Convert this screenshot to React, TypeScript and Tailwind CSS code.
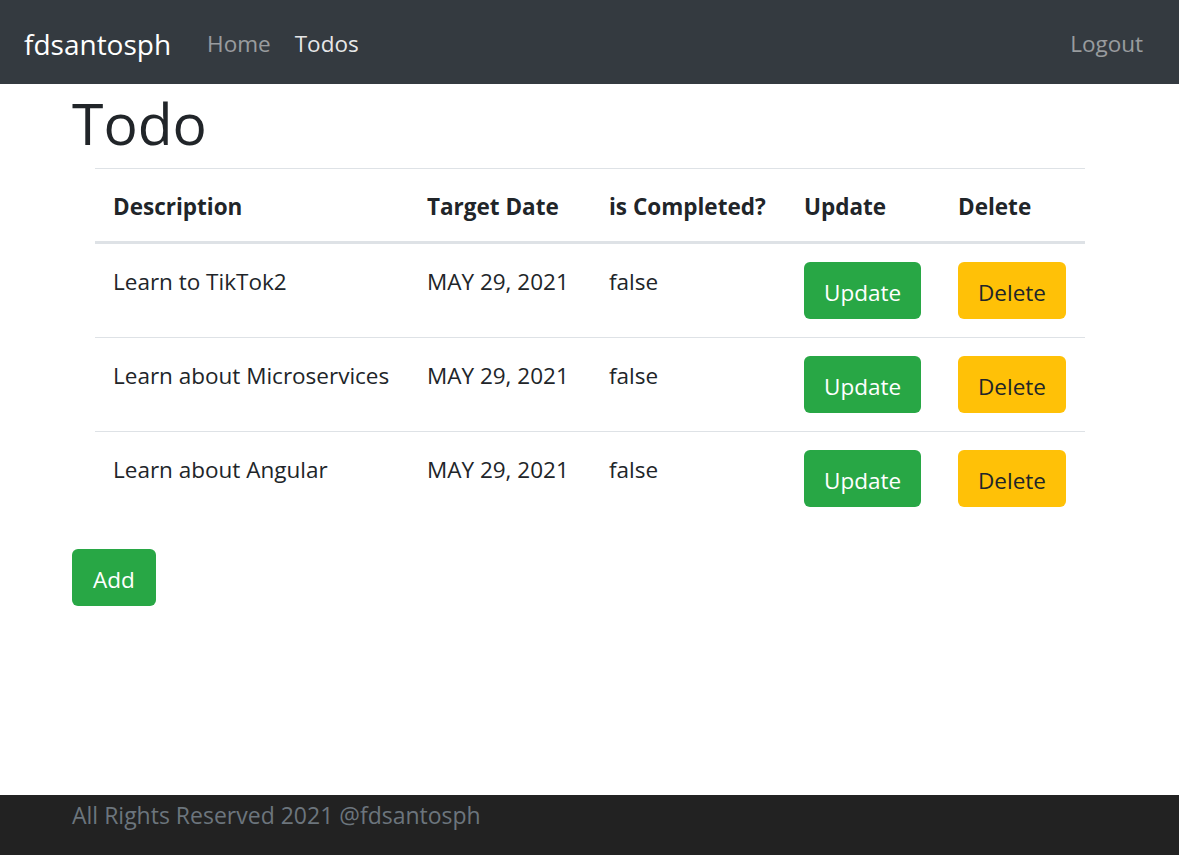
const todos = [
  { id: 1, description: "Learn to TikTok2", targetDate: "MAY 29, 2021", done: false },
  { id: 2, description: "Learn about Microservices", targetDate: "MAY 29, 2021", done: false },
  { id: 3, description: "Learn about Angular", targetDate: "MAY 29, 2021", done: false },
];

const App = () => {
  return (
    <div className="flex flex-col min-h-[855px] bg-white text-[#212529] font-['Open_Sans',sans-serif] text-[22.5px] leading-[36px]">
      {/* HEADER */}
      <nav className="h-[84px] bg-[#343a40] flex flex-row items-center px-[24px] pt-[3px]">
        <div className="text-[28px] text-white mr-[24px]">fdsantosph</div>
        <div className="flex flex-row">
          <a className="px-[12px] text-[#ffffff80]">Home</a>
          <a className="px-[12px] text-[#ffffffe6]">Todos</a>
        </div>
        <div className="ml-auto">
          <a className="px-[12px] text-[#ffffff80]">Logout</a>
        </div>
      </nav>

      {/* BODY */}
      <main className="flex-1 px-[72px]">
        <h1 className="text-[57px] leading-[72px] font-medium mb-[12px] pt-[3px] h-[72px]">Todo</h1>
        <div className="px-[23px]">
          <table className="w-full table-fixed border-collapse mb-[24px]">
            <thead>
              <tr className="border-t border-[#dee2e6]">
                <th className="w-[314px] text-left font-bold px-[18px] pt-[20px] pb-[16px] whitespace-nowrap border-b-[3px] border-[#dee2e6]">Description</th>
                <th className="w-[182px] text-left font-bold px-[18px] pt-[20px] pb-[16px] whitespace-nowrap border-b-[3px] border-[#dee2e6]">Target Date</th>
                <th className="w-[195px] text-left font-bold px-[18px] pt-[20px] pb-[16px] whitespace-nowrap border-b-[3px] border-[#dee2e6]">is Completed?</th>
                <th className="w-[154px] text-left font-bold px-[18px] pt-[20px] pb-[16px] whitespace-nowrap border-b-[3px] border-[#dee2e6]">Update</th>
                <th className="w-[145px] text-left font-bold px-[18px] pt-[20px] pb-[16px] whitespace-nowrap border-b-[3px] border-[#dee2e6]">Delete</th>
              </tr>
            </thead>
            <tbody>
              {todos.map((todo, index) => (
                <tr
                  key={todo.id}
                  className={`align-top ${index < todos.length - 1 ? "border-b border-[#dee2e6]" : ""}`}
                >
                  <td className="px-[18px] pt-[20px] pb-[16px] whitespace-nowrap">{todo.description}</td>
                  <td className="px-[18px] pt-[20px] pb-[16px] whitespace-nowrap">{todo.targetDate}</td>
                  <td className="px-[18px] pt-[20px] pb-[16px]">{String(todo.done)}</td>
                  <td className="p-[18px]">
                    <button className="bg-[#28a745] text-white rounded-[6px] px-[20px] pt-[12.5px] pb-[8.5px]">Update</button>
                  </td>
                  <td className="p-[18px]">
                    <button className="bg-[#ffc107] text-[#212529] rounded-[6px] px-[20px] pt-[12.5px] pb-[8.5px]">Delete</button>
                  </td>
                </tr>
              ))}
            </tbody>
          </table>
        </div>
        <button className="bg-[#28a745] text-white rounded-[6px] px-[21px] pt-[12.5px] pb-[8.5px]">Add</button>
      </main>

      {/* FOOTER */}
      <footer className="h-[60px] bg-[#222222] px-[72px] pt-[2px]">
        <span className="text-[#6c757d] text-[23px]">All Rights Reserved 2021 @fdsantosph</span>
      </footer>
    </div>
  );
};

export default App;
